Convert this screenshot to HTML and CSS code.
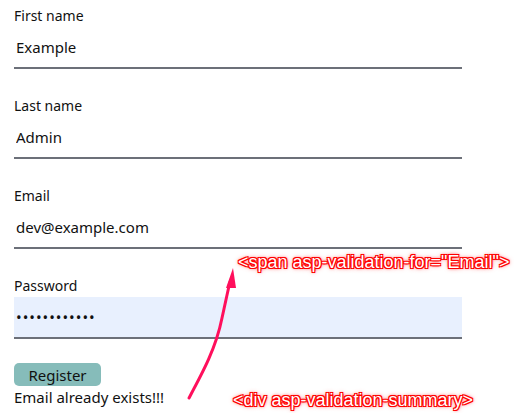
FILE: index.html
```html
<!DOCTYPE html>
<html lang="en">
<head>
    <meta charset="UTF-8">
    <title>Register</title>
    <link rel="stylesheet" href="styles.css">
</head>
<body>
    <form class="register-form" method="post">
        <div class="form-group">
            <label for="firstName">First name</label>
            <input type="text" id="firstName" value="Example">
        </div>
        <div class="form-group">
            <label for="lastName">Last name</label>
            <input type="text" id="lastName" value="Admin">
        </div>
        <div class="form-group">
            <label for="email">Email</label>
            <input type="text" id="email" value="dev@example.com">
        </div>
        <div class="form-group">
            <label for="password">Password</label>
            <input type="password" id="password" class="autofilled" value="passwordpass">
        </div>
        <button type="submit" class="btn-register">Register</button>
        <div class="validation-summary">Email already exists!!!</div>
    </form>

    <span class="note note-span">&lt;span asp-validation-for="Email"&gt;</span>
    <span class="note note-div">&lt;div asp-validation-summary&gt;</span>

    <svg class="arrow" width="517" height="413" viewBox="0 0 517 413">
        <path d="M189 398 C 203 372, 216 348, 222 318 C 226 300, 228 290, 230 282" fill="none" stroke="#ff0f5c" stroke-width="3" stroke-linecap="round"/>
        <polygon points="233,268 226,288 236,288" fill="#ff0f5c"/>
    </svg>
</body>
</html>
```

FILE: styles.css
```css
body {
    margin: 0;
    padding: 6px 14px;
    font-family: "Noto Sans", "Open Sans", sans-serif;
    font-size: 14px;
    color: #111;
    background: #fff;
}
.register-form {
    width: 448px;
}
.form-group {
    margin-bottom: 27px;
}
label {
    display: block;
    height: 21px;
    line-height: 20px;
}
input[type="text"],
input[type="password"] {
    display: block;
    box-sizing: border-box;
    width: 100%;
    height: 42px;
    padding: 0 2px;
    border: none;
    border-bottom: 2px solid #6c7079;
    font-family: inherit;
    font-size: 15px;
    color: #111;
    background: #fff;
    outline: none;
}
input.autofilled {
    background: #e8f0fe;
    letter-spacing: 1px;
}
.btn-register {
    display: block;
    margin-top: -3px;
    width: 87px;
    height: 23px;
    padding: 0;
    border: none;
    border-radius: 5px;
    background: #86bcba;
    font-family: inherit;
    font-size: 15px;
    color: #111;
}
.validation-summary {
    line-height: 22px;
    font-size: 15px;
}
.note {
    position: absolute;
    font-family: "Liberation Sans", Arial, sans-serif;
    font-size: 18px;
    line-height: 20px;
    color: #fff;
    -webkit-text-stroke: 1.5px #f00000;
    paint-order: stroke fill;
    text-shadow: 1px 1px 0 #f00, -1px -1px 0 #f00, 1px -1px 0 #f00, -1px 1px 0 #f00, 0 0 3px #f00, 0 0 5px #f55;
    white-space: nowrap;
}
.note-span {
    left: 238px;
    top: 252px;
}
.note-div {
    left: 233px;
    top: 390px;
}
.arrow {
    position: absolute;
    left: 0;
    top: 0;
    pointer-events: none;
}
```
